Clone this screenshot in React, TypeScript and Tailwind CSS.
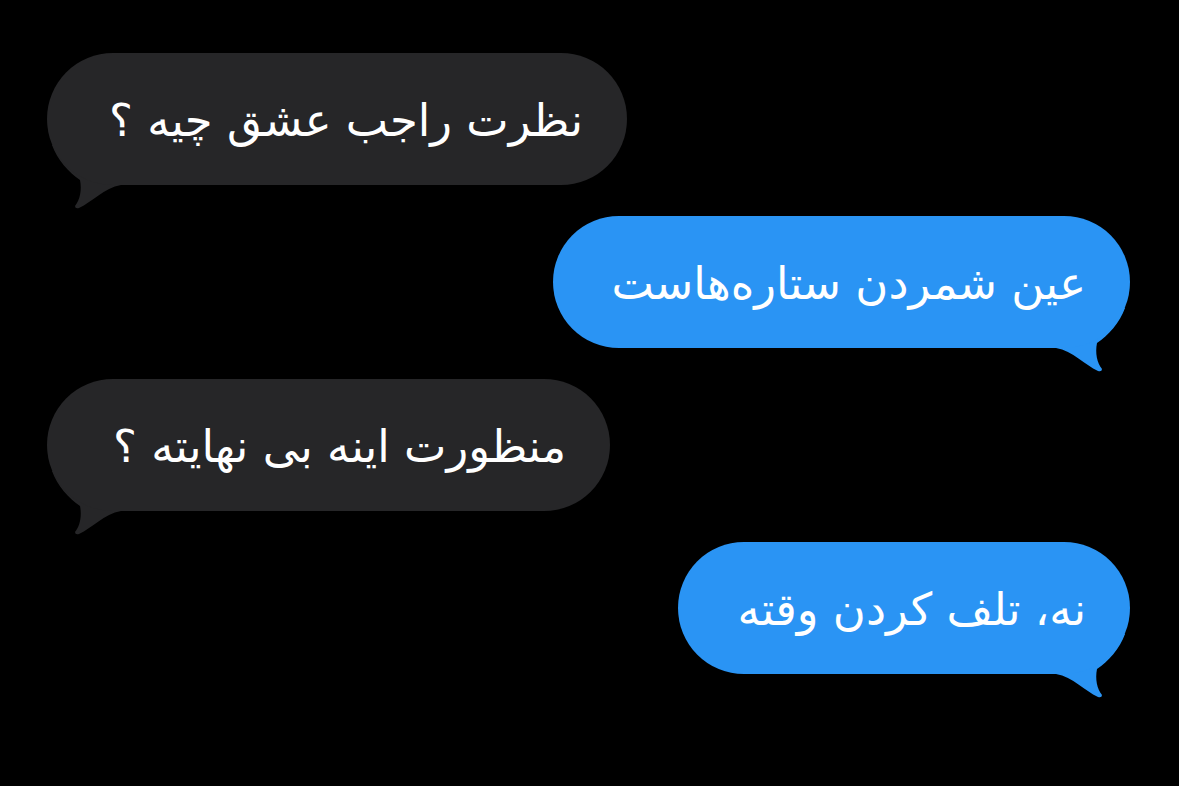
import React from 'react';

type Msg = { text: string; mine: boolean; width: string };

const messages: Msg[] = [
  { text: 'نظرت راجب عشق چیه ؟', mine: false, width: 'w-[580px]' },
  { text: 'عین شمردن ستاره‌هاست', mine: true, width: 'w-[577px]' },
  { text: 'منظورت اینه بی نهایته ؟', mine: false, width: 'w-[563px]' },
  { text: 'نه، تلف کردن وقته', mine: true, width: 'w-[452px]' },
];

const Tail: React.FC<{ mine: boolean; color: string }> = ({ mine, color }) => {
  // drawn for a left bubble, mirrored for the right ones
  const d =
    'M5,0 C10,14 22,28 33,35 C35,45 33,55 28,61 Q28,64 32,63 C45,57 57,43 74,40 L74,0 Z';
  return (
    <svg
      width="80"
      height="66"
      viewBox="0 0 80 66"
      className={
        mine
          ? 'absolute right-0 bottom-[-26px] -scale-x-100'
          : 'absolute left-0 bottom-[-26px]'
      }
    >
      <path d={d} fill={color} />
    </svg>
  );
};

const Bubble: React.FC<{ msg: Msg }> = ({ msg }) => {
  const bg = msg.mine ? '#2a94f4' : '#262628';
  return (
    <div className={`relative ${msg.width} h-[132px]`}>
      <Tail mine={msg.mine} color={bg} />
      <div
        dir="rtl"
        className={`relative flex h-full items-center rounded-[66px] pr-[44px] pl-[50px] text-white ${
          msg.mine ? 'bg-[#2a94f4]' : 'bg-[#262628]'
        }`}
      >
        <span className="whitespace-nowrap pt-[2px] text-[45px] leading-none font-['DejaVu_Sans',sans-serif]">
          {msg.text}
        </span>
      </div>
    </div>
  );
};

export default function App() {
  return (
    <div className="min-h-[786px] w-full bg-black pt-[53px] pl-[47px] pr-[49px]">
      <div className="flex flex-col gap-[31px]">
        {messages.map((m, i) => (
          <div key={i} className={m.mine ? 'flex justify-end' : 'flex justify-start'}>
            <Bubble msg={m} />
          </div>
        ))}
      </div>
    </div>
  );
}
